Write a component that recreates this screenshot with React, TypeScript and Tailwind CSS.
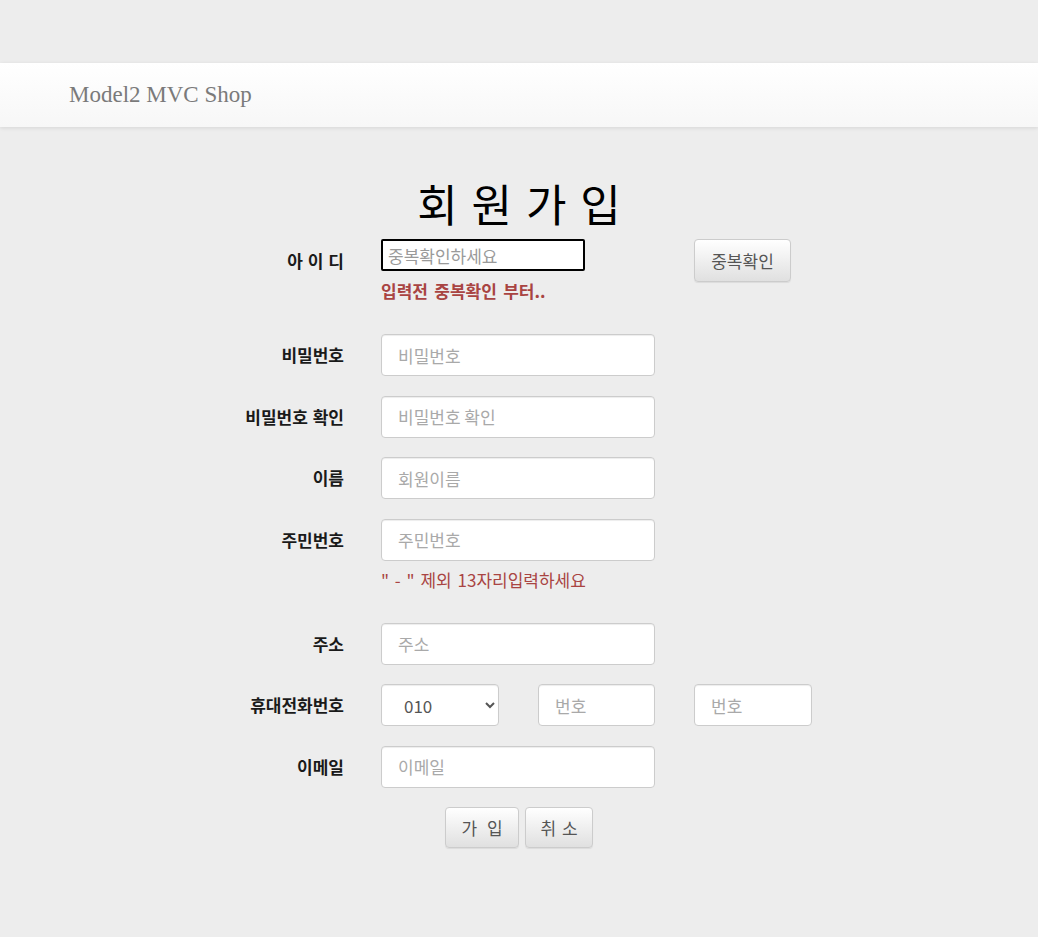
import { ReactNode } from "react";

const kr = "font-['Noto_Sans_CJK_KR','Noto_Sans',sans-serif]";

const inputCls =
  "h-[42px] rounded-[4px] border border-[#cccccc] bg-white px-[16px] text-[17px] text-[#555] placeholder:text-[#a9a9a9] shadow-[inset_0_1px_1px_rgba(0,0,0,0.075)] outline-none";

const btnCls =
  "rounded-[4px] border border-[#cccccc] bg-gradient-to-b from-white to-[#e0e0e0] text-[17px] text-[#555] shadow-[0_1px_1px_rgba(0,0,0,0.075)]";

function Row({ label, children, className = "", labelH = "h-[42px]" }: { label: string; children: ReactNode; className?: string; labelH?: string }) {
  return (
    <div className={`flex items-start ${className}`}>
      <label className={`flex w-[344px] shrink-0 items-center justify-end text-[17px] font-bold text-[#1a1a1a] [word-spacing:1px] ${labelH}`}>{label}</label>
      <div className="ml-[37px]">{children}</div>
    </div>
  );
}

export default function App() {
  return (
    <div className={`min-h-screen bg-[#ededed] pt-[63px] ${kr}`}>
      <nav className="flex h-[64px] items-center bg-gradient-to-b from-white to-[#f7f7f7] pl-[69px] shadow-[0_1px_4px_rgba(0,0,0,0.1)]">
        <span className="font-['Liberation_Serif',serif] text-[23px] text-[#7a7a7a]">Model2 MVC Shop</span>
      </nav>

      <h1 className="mt-[50px] text-center text-[44px] leading-[52px] font-normal text-black [word-spacing:4px]">회 원 가 입</h1>

      <form className="mt-[10px] pb-[80px]">
        <Row label="아 이 디" labelH="h-[43px]" className="mb-[31px]">
          <div className="flex items-start">
            <div className="w-[313px]">
              <input
                className="h-[32px] w-[204px] rounded-[2px] border-2 border-black bg-white px-[5px] text-[17px] placeholder:text-[#9a9a9a] outline-none"
                placeholder="중복확인하세요"
              />
              <p className="mt-[8px] text-[17px] leading-[24px] font-bold text-[#a94442] [word-spacing:2.5px]">입력전 중복확인 부터..</p>
            </div>
            <button type="button" className={`${btnCls} h-[43px] w-[97px]`}>중복확인</button>
          </div>
        </Row>

        <Row label="비밀번호" className="mb-[19.5px]">
          <input className={`${inputCls} w-[274px]`} placeholder="비밀번호" />
        </Row>
        <Row label="비밀번호 확인" className="mb-[19.5px]">
          <input className={`${inputCls} w-[274px]`} placeholder="비밀번호 확인" />
        </Row>
        <Row label="이름" className="mb-[19.5px]">
          <input className={`${inputCls} w-[274px]`} placeholder="회원이름" />
        </Row>
        <Row label="주민번호" className="mb-[31px]">
          <input className={`${inputCls} w-[274px]`} placeholder="주민번호" />
          <p className="mt-[7px] text-[17px] leading-[24px] text-[#a94442] [word-spacing:2px]">" - " 제외 13자리입력하세요</p>
        </Row>
        <Row label="주소" className="mb-[19.5px]">
          <input className={`${inputCls} w-[274px]`} placeholder="주소" />
        </Row>
        <Row label="휴대전화번호" className="mb-[19.5px]">
          <div className="flex">
            <select className={`${inputCls} w-[118px] pl-[18px] pr-[8px]`} defaultValue="010">
              <option value="010">010</option>
              <option value="011">011</option>
              <option value="016">016</option>
              <option value="017">017</option>
              <option value="018">018</option>
              <option value="019">019</option>
            </select>
            <input className={`${inputCls} ml-[39px] w-[117px]`} placeholder="번호" />
            <input className={`${inputCls} ml-[39px] w-[118px]`} placeholder="번호" />
          </div>
        </Row>
        <Row label="이메일" className="mb-[19.5px]">
          <input className={`${inputCls} w-[274px]`} placeholder="이메일" />
        </Row>

        <div className="flex justify-center gap-[6px]">
          <button type="button" className={`${btnCls} h-[41px] w-[74px] [word-spacing:6px]`}>가 입</button>
          <button type="button" className={`${btnCls} h-[41px] w-[68px] [word-spacing:2px]`}>취 소</button>
        </div>
      </form>
    </div>
  );
}
